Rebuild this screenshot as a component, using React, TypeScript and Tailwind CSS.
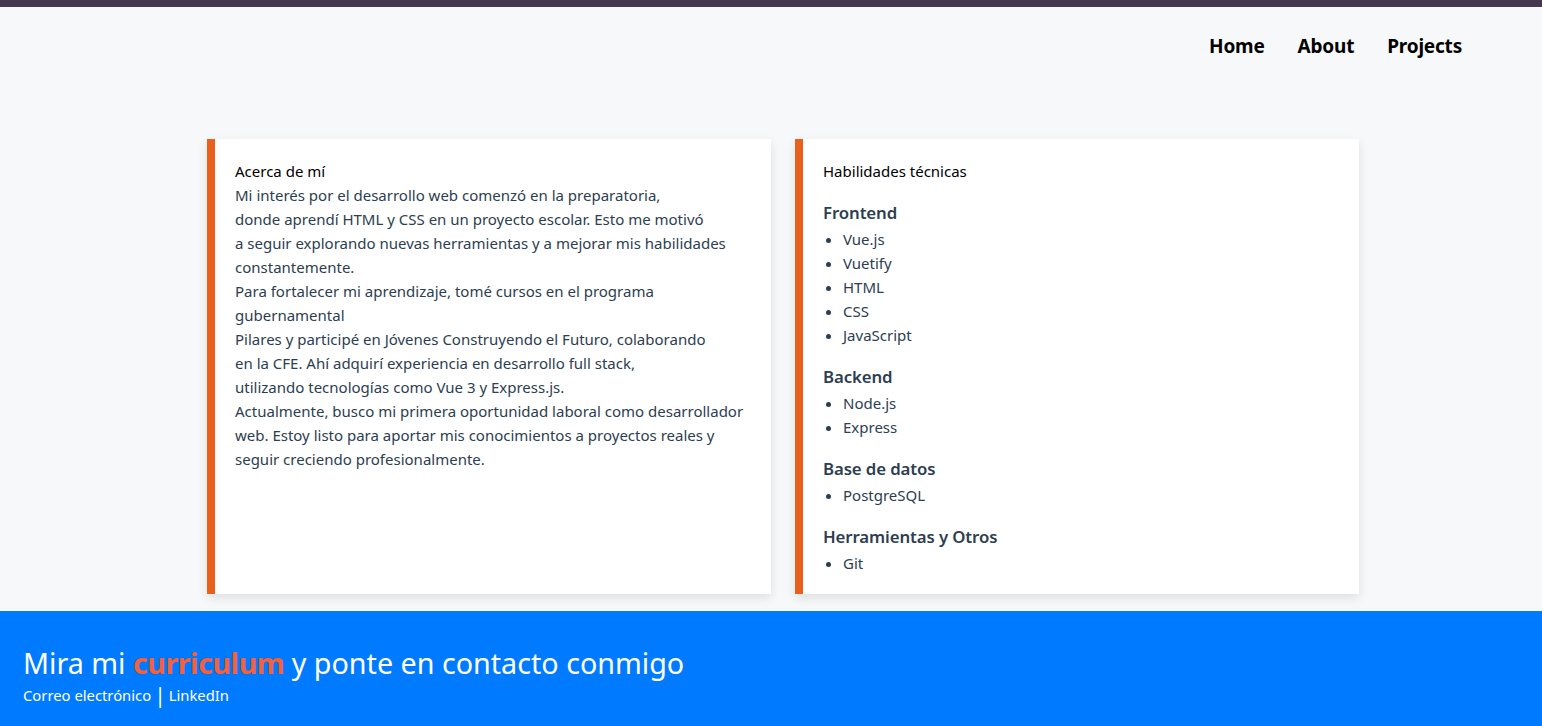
import React from "react";

const skills: { title: string; items: string[] }[] = [
  { title: "Frontend", items: ["Vue.js", "Vuetify", "HTML", "CSS", "JavaScript"] },
  { title: "Backend", items: ["Node.js", "Express"] },
  { title: "Base de datos", items: ["PostgreSQL"] },
  { title: "Herramientas y Otros", items: ["Git"] },
];

export default function App() {
  return (
    <div
      className="min-h-[726px] bg-[#f7f8fa] flex flex-col"
      style={{ fontFamily: '"Noto Sans", "Open Sans", sans-serif' }}
    >
      <div className="h-[7px] bg-[#45374f]" />
      <nav className="flex justify-end gap-[33px] pr-[80px] pt-[25px] h-[132px]">
        {["Home", "About", "Projects"].map((n) => (
          <a key={n} className="text-[19px] font-bold text-black leading-[28px] tracking-[-0.2px]">
            {n}
          </a>
        ))}
      </nav>
      <main className="flex gap-6 pl-[207px]">
        <section className="w-[564px] bg-white border-l-8 border-[#e8601c] shadow-[0_4px_10px_rgba(0,0,0,0.1)] px-5 pt-5 pb-5 text-[15px] leading-6 text-[#2c3e50]">
          <div className="text-black">Acerca de mí</div>
          <p>
            Mi interés por el desarrollo web comenzó en la preparatoria,
            <br />
            donde aprendí HTML y CSS en un proyecto escolar. Esto me motivó
            <br />
            a seguir explorando nuevas herramientas y a mejorar mis habilidades
            <br />
            constantemente.
            <br />
            Para fortalecer mi aprendizaje, tomé cursos en el programa
            <br />
            gubernamental
            <br />
            Pilares y participé en Jóvenes Construyendo el Futuro, colaborando
            <br />
            en la CFE. Ahí adquirí experiencia en desarrollo full stack,
            <br />
            utilizando tecnologías como Vue 3 y Express.js.
            <br />
            Actualmente, busco mi primera oportunidad laboral como desarrollador
            <br />
            web. Estoy listo para aportar mis conocimientos a proyectos reales y
            <br />
            seguir creciendo profesionalmente.
          </p>
        </section>
        <section className="w-[564px] bg-white border-l-8 border-[#e8601c] shadow-[0_4px_10px_rgba(0,0,0,0.1)] px-5 pt-5 pb-[19px] text-[15px] leading-6 text-[#2c3e50]">
          <div className="text-black">Habilidades técnicas</div>
          {skills.map((s) => (
            <div key={s.title} className="mt-4">
              <h3 className="text-[16.8px] leading-7 font-semibold text-[#2c3e50] tracking-[-0.1px]">{s.title}</h3>
              <ul className="list-disc pl-5">
                {s.items.map((i) => (
                  <li key={i}>{i}</li>
                ))}
              </ul>
            </div>
          ))}
        </section>
      </main>
      <footer className="mt-[17px] flex-1 bg-[#007bff] text-white pl-[23px] pt-[34px] pb-[20px]">
        <div className="text-[28.7px] leading-[36px]">
          Mira mi{" "}
          <span className="font-bold text-[#f4613f] tracking-[-0.5px] [text-shadow:0_0_1px_rgba(0,0,0,0.3)]">curriculum</span> y
          ponte en contacto conmigo
        </div>
        <div className="text-[14.8px] leading-[28px] flex items-center">
          <span>Correo electrónico</span>
          <span className="text-[21px] leading-[24px] mx-[3px]">|</span>
          <span>LinkedIn</span>
        </div>
      </footer>
    </div>
  );
}
